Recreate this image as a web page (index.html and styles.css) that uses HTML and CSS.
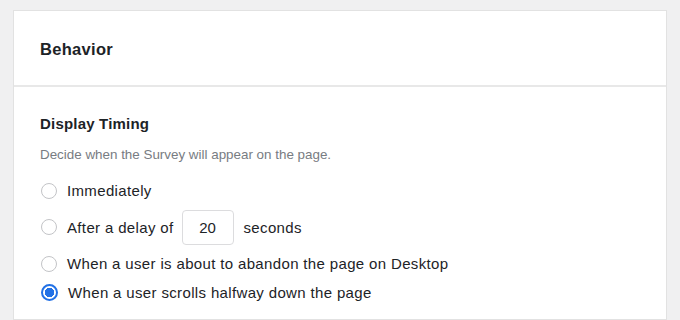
FILE: index.html
```html
<!DOCTYPE html>
<html>
<head>
<meta charset="utf-8">
<link rel="stylesheet" href="styles.css">
</head>
<body>
<div class="card">
  <div class="card-header">Behavior</div>
  <div class="card-body">
    <h3 class="field-title">Display Timing</h3>
    <p class="field-desc">Decide when the Survey will appear on the page.</p>
    <div class="options">
      <label class="option"><span class="radio"></span><span>Immediately</span></label>
      <label class="option delay"><span class="radio"></span><span>After a delay of</span><span class="num">20</span><span>seconds</span></label>
      <label class="option"><span class="radio"></span><span>When a user is about to abandon the page on Desktop</span></label>
      <label class="option"><span class="radio checked"></span><span>When a user scrolls halfway down the page</span></label>
    </div>
  </div>
</div>
</body>
</html>
```
FILE: styles.css
```css
html, body {
  margin: 0;
  padding: 0;
  background: #f0f0f1;
  font-family: "Liberation Sans", Arial, sans-serif;
  color: #1d2327;
}
.card {
  margin: 10px 13px 0 13px;
  background: #fff;
  border: 1px solid #e2e2e2;
  height: 310px;
  box-sizing: border-box;
}
.card-header {
  height: 76px;
  display: flex;
  align-items: center;
  padding-left: 26px;
  padding-top: 2px;
  box-sizing: border-box;
  font-size: 16.5px;
  letter-spacing: 0.3px;
  font-weight: bold;
  border-bottom: 2px solid #e8e8e8;
}
.card-body {
  padding: 28px 26px 0 26px;
}
.field-title {
  margin: 0;
  font-size: 15px;
  letter-spacing: 0.2px;
  font-weight: bold;
  line-height: 18px;
}
.field-desc {
  margin: 13px 0 0 0;
  font-size: 13.4px;
  line-height: 18px;
  color: #787c82;
}
.options {
  display: flex;
  flex-direction: column;
  margin-top: 12px;
}
.option {
  display: flex;
  align-items: center;
  gap: 10px;
  font-size: 15px;
  letter-spacing: 0.35px;
  height: 29px;
}
.option.delay {
  height: 44px;
}
.radio {
  width: 14px;
  height: 14px;
  border: 1.5px solid #c3c4c7;
  border-radius: 50%;
  box-sizing: content-box;
  margin-left: 1px;
  flex: none;
}
.radio.checked {
  border: 2px solid #2271e6;
  width: 13px;
  height: 13px;
  background: radial-gradient(circle, #2271e6 0 4.5px, #fff 5px);
}
.num {
  width: 50px;
  height: 33px;
  border: 1px solid #dcdcde;
  border-radius: 4px;
  display: flex;
  align-items: center;
  justify-content: center;
  letter-spacing: 0;
  margin-left: -2px;
}
```
